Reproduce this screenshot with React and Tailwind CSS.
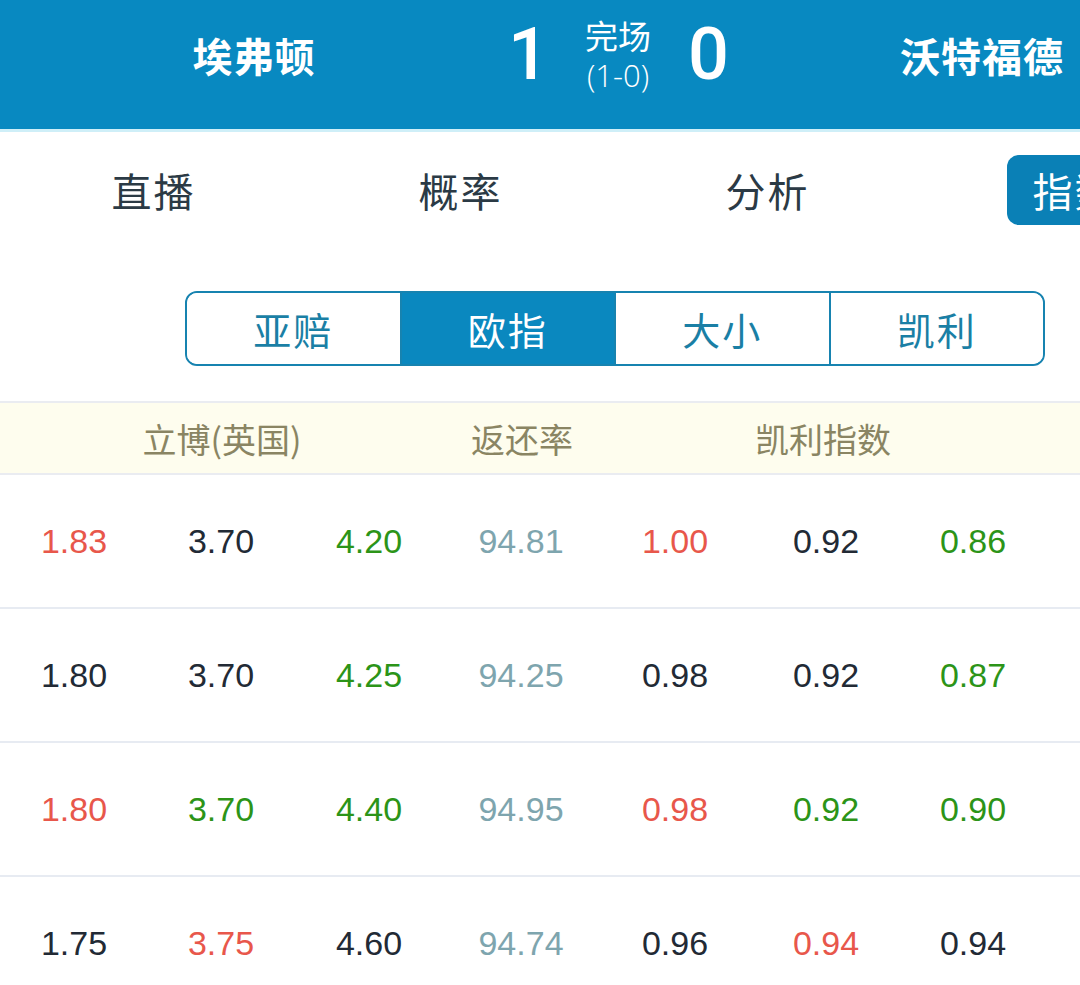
import React, { useState } from "react";

const RED = "text-[#e8574b]";
const DARK = "text-[#222a35]";
const GREEN = "text-[#2c9418]";
const TEAL = "text-[#7ea5ae]";

const rows = [
  [["1.83", RED], ["3.70", DARK], ["4.20", GREEN], ["94.81", TEAL], ["1.00", RED], ["0.92", DARK], ["0.86", GREEN]],
  [["1.80", DARK], ["3.70", DARK], ["4.25", GREEN], ["94.25", TEAL], ["0.98", DARK], ["0.92", DARK], ["0.87", GREEN]],
  [["1.80", RED], ["3.70", GREEN], ["4.40", GREEN], ["94.95", TEAL], ["0.98", RED], ["0.92", GREEN], ["0.90", GREEN]],
  [["1.75", DARK], ["3.75", RED], ["4.60", DARK], ["94.74", TEAL], ["0.96", DARK], ["0.94", RED], ["0.94", DARK]],
];

const tabs = ["直播", "概率", "分析", "指数"];
const segments = ["亚赔", "欧指", "大小", "凯利"];

const cjk = "font-['Noto_Sans_CJK_SC','Noto_Sans',sans-serif]";

const App = () => {
  const [tab, setTab] = useState(3);
  const [seg, setSeg] = useState(1);

  return (
    <div className={`w-[1080px] h-[985px] overflow-hidden bg-white ${cjk}`}>
      {/* match header */}
      <div className="h-[132px] pb-[19px] bg-[#0889c1] border-b-[3px] border-[#cfeff8] flex items-center text-white">
        <div className="w-[508px] flex justify-center text-[40px] font-bold tracking-[1px]">
          埃弗顿
        </div>
        <div className="text-[72px] leading-none font-['Roboto',sans-serif] font-medium w-[40px] text-right">
          1
        </div>
        <div className="w-[140px] flex flex-col items-center">
          <span className="text-[33px] leading-[40px]">完场</span>
          <span className="text-[31px] leading-[40px] font-['Open_Sans',sans-serif] font-light">(1-0)</span>
        </div>
        <div className="text-[72px] leading-none font-['Roboto',sans-serif] font-medium w-[44px]">
          0
        </div>
        <div className="flex-1 flex justify-end pr-[16px] text-[40px] font-bold tracking-[1px]">
          沃特福德
        </div>
      </div>

      {/* tabs */}
      <div className="flex h-[108px] pt-[8px] items-center w-[1228px]">
        {tabs.map((t, i) => (
          <div key={t} className="w-[307px] flex justify-center">
            <button
              onClick={() => setTab(i)}
              className={
                i === tab
                  ? "h-[70px] px-[26px] rounded-[12px] bg-[#0a80b6] text-white text-[40px] leading-none tracking-[2px]"
                  : "h-[70px] px-[26px] text-[#2b3a45] text-[40px] leading-none tracking-[2px]"
              }
            >
              {t}
            </button>
          </div>
        ))}
      </div>

      {/* segmented control */}
      <div className="pt-[51px] pl-[185px]">
        <div className="w-[860px] h-[75px] flex border-2 border-[#1783b0] rounded-[12px] overflow-hidden">
          {segments.map((s, i) => (
            <button
              key={s}
              onClick={() => setSeg(i)}
              className={
                (i > 0 ? "border-l-2 border-[#1783b0] " : "") +
                (i === seg
                  ? "flex-1 bg-[#0a88bf] text-white text-[38px] leading-none tracking-[2px]"
                  : "flex-1 bg-white text-[#1a7fa5] text-[38px] leading-none tracking-[2px]")
              }
            >
              {s}
            </button>
          ))}
        </div>
      </div>

      {/* table header */}
      <div className="mt-[35px] h-[74px] bg-[#fefdee] border-y-2 border-[#eaecf1] grid grid-cols-[444px_156px_446px] items-center text-[34px] text-[#8a8563]">
        <div className="text-center">立博(英国)</div>
        <div className="text-center">返还率</div>
        <div className="text-center">凯利指数</div>
      </div>

      {/* rows */}
      <div className="font-['Liberation_Sans',sans-serif] text-[34px]">
        {rows.map((r, ri) => (
          <div
            key={ri}
            className="h-[134px] border-b-2 border-[#e7ebf2] grid grid-cols-[148px_146px_150px_154px_154px_148px_146px] items-center"
          >
            {r.map(([v, c], ci) => (
              <div key={ci} className={`text-center ${c}`}>
                {v}
              </div>
            ))}
          </div>
        ))}
      </div>
    </div>
  );
};

export default App;
